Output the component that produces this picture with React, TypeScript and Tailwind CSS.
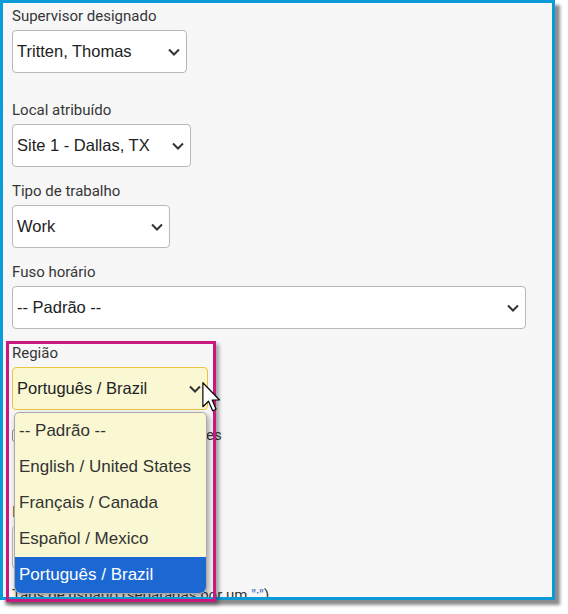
import React from "react";

const labelFont = { fontFamily: "Roboto, 'Noto Sans', sans-serif" };
const controlFont = { fontFamily: "'Liberation Sans', Arial, sans-serif" };

function Chevron() {
  return (
    <svg width="12" height="8" viewBox="0 0 12 8" className="shrink-0">
      <polyline points="1,1.5 6,6.5 11,1.5" fill="none" stroke="#333" strokeWidth="2" />
    </svg>
  );
}

function FieldLabel({ children }: { children: React.ReactNode }) {
  return (
    <div className="h-[20px] leading-[20px] text-[15px] text-[#363636] mb-[4px] whitespace-nowrap" style={labelFont}>
      {children}
    </div>
  );
}

function SelectBox({
  value,
  width,
  active,
}: {
  value: string;
  width: string;
  active?: boolean;
}) {
  return (
    <div
      className={
        "h-[43px] flex items-center justify-between rounded-[4px] border pl-[4px] pr-[6px] text-[16.5px] text-[#222] " +
        width +
        (active ? " bg-[#f9f8d3] border-[#ecc43e]" : " bg-white border-[#b8b8b8]")
      }
      style={controlFont}
    >
      <span className="whitespace-nowrap">{value}</span>
      <Chevron />
    </div>
  );
}

const regions = [
  "-- Padrão --",
  "English / United States",
  "Français / Canada",
  "Español / Mexico",
  "Português / Brazil",
];

export default function App() {
  return (
    <div className="relative w-[568px] h-[614px] bg-white overflow-hidden">
      <div className="w-[555px] h-[600px] border-[3px] border-[#0b9bd8] bg-[#f7f7f7] shadow-[5px_5px_3px_rgba(0,0,0,0.45)] overflow-hidden">
        <div className="pl-[9px] pt-[3px] flex flex-col">
          <FieldLabel>Supervisor designado</FieldLabel>
          <SelectBox value="Tritten, Thomas" width="w-[175px]" />

          <div className="mt-[27px]">
            <FieldLabel>Local atribuído</FieldLabel>
            <SelectBox value="Site 1 - Dallas, TX" width="w-[179px]" />
          </div>

          <div className="mt-[14px]">
            <FieldLabel>Tipo de trabalho</FieldLabel>
            <SelectBox value="Work" width="w-[158px]" />
          </div>

          <div className="mt-[14px]">
            <FieldLabel>Fuso horário</FieldLabel>
            <SelectBox value="-- Padrão --" width="w-[514px]" />
          </div>

          <div className="mt-[14px] relative">
            <FieldLabel>Região</FieldLabel>
            <SelectBox value="Português / Brazil" width="w-[196px]" active />

            {/* open option list */}
            <div
              className="absolute left-[2px] top-[69px] z-10 w-[193px] rounded-b-[7px] rounded-t-[5px] border border-[#a9a9a9] bg-[#f9f8d3] overflow-hidden shadow-[2px_3px_6px_rgba(0,0,0,0.35)]"
              style={controlFont}
            >
              {regions.map((r, i) => (
                <div
                  key={r}
                  className={
                    "h-[36px] flex items-center pl-[4px] text-[17px] whitespace-nowrap " +
                    (i === regions.length - 1 ? "bg-[#1b68d3] text-white" : "text-[#333]")
                  }
                >
                  {r}
                </div>
              ))}
            </div>
          </div>

          <div className="mt-[15px] h-[20px] flex items-center gap-[5px]" style={labelFont}>
            <div className="w-[13px] h-[13px] rounded-[3px] border border-[#8c8c8c] bg-white" />
            <span className="text-[15px] text-[#363636] whitespace-nowrap">Enviar alertas a supervisores</span>
          </div>

          <div className="mt-[57px]">
            <FieldLabel>Idioma</FieldLabel>
            <div className="h-[43px] w-[180px] rounded-[4px] border border-[#b8b8b8] bg-white" />
          </div>

          <div className="mt-[16px] text-[15px] text-[#363636] leading-[20px] whitespace-nowrap" style={labelFont}>
            Tags de usuário (separadas por um <span className="text-[#2f6fc4]">";"</span>)
          </div>
        </div>
      </div>

      {/* highlight frame */}
      <div className="absolute left-[6px] top-[341px] w-[210px] h-[261px] border-[3px] border-[#c8197f] shadow-[3px_3px_4px_rgba(0,0,0,0.35)] pointer-events-none" />

      {/* mouse pointer */}
      <svg
        className="absolute left-[202px] top-[382px]"
        width="19"
        height="30"
        viewBox="0 0 12.5 20"
      >
        <path
          d="M0.5 0.5 L0.5 16.5 L4.3 12.8 L7 19.2 L9.3 18.2 L6.7 12 L11.6 12 Z"
          fill="white"
          stroke="black"
          strokeWidth="0.8"
          strokeLinejoin="round"
        />
      </svg>
    </div>
  );
}
